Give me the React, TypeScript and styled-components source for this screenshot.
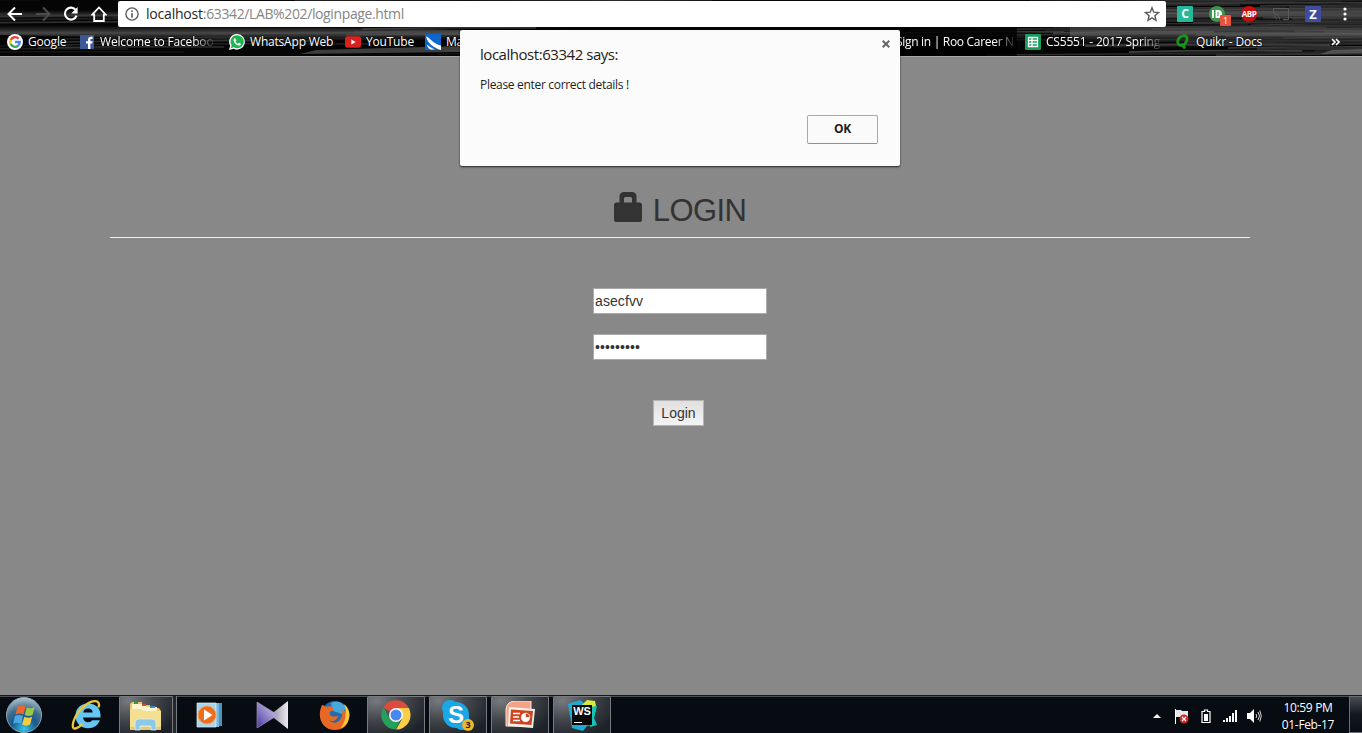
import React from "react";
import styled, { createGlobalStyle, css } from "styled-components";

const uiFont = `"Segoe UI", "Open Sans", "Noto Sans", sans-serif`;
const pageFont = `"Liberation Sans", Arial, sans-serif`;

const GlobalStyle = createGlobalStyle`
  * { box-sizing: border-box; }
  body { margin: 0; overflow: hidden; background: #888; }
  svg { display: block; flex: none; }
`;

const Screen = styled.div`
  position: relative;
  display: flex;
  flex-direction: column;
  width: 1362px;
  height: 733px;
  overflow: hidden;
  background: #888;
  font-family: ${uiFont};
`;

/* ---------- Browser chrome ---------- */

const Chrome = styled.header`
  position: relative;
  height: 57px;
  background: #050505;
`;

const Texture = styled.svg`
  position: absolute;
  inset: 0;
`;

const Toolbar = styled.div`
  position: relative;
  display: flex;
  align-items: center;
  height: 27px;
  padding-top: 1px;
`;

const NavButtons = styled.div`
  display: flex;
  align-items: center;
  gap: 12px;
  width: 118px;
  padding-left: 7px;
`;

const AddressBar = styled.div`
  display: flex;
  align-items: center;
  width: 1048px;
  height: 26px;
  padding: 0 6px 0 7px;
  border-radius: 2px;
  background: #fff;
`;

const Url = styled.span`
  flex: 1;
  margin-left: 7px;
  font-size: 14px;
  line-height: 20px;
  letter-spacing: -0.38px;
  color: #858585;
  b { font-weight: 400; color: #262626; letter-spacing: -0.2px; }
`;

const Extensions = styled.div`
  display: flex;
  flex: 1;
  align-items: center;
  gap: 16px;
  padding: 0 15px 0 11px;
`;

const ExtensionTile = styled.div<{ $color: string; $round?: boolean; $size?: number; $tight?: boolean }>`
  position: relative;
  display: flex;
  align-items: center;
  justify-content: center;
  flex: none;
  width: 16px;
  height: 16px;
  border-radius: ${(p) => (p.$round ? "50%" : "1px")};
  background: ${(p) => p.$color};
  color: #fff;
  font: 700 ${(p) => p.$size ?? 12}px/16px ${uiFont};
  letter-spacing: ${(p) => (p.$tight ? "-0.4px" : "0")};
`;

const CountBadge = styled.span`
  position: absolute;
  left: 11px;
  top: 9px;
  width: 11px;
  height: 11px;
  border-radius: 1px;
  background: #e8513f;
  font: 400 9px/11px ${uiFont};
  text-align: center;
`;

const BookmarksBar = styled.nav`
  position: relative;
  display: flex;
  align-items: center;
  height: 30px;
  padding-left: 7px;
  border-bottom: 1px solid #a8a8a8;
`;

const Bookmark = styled.div<{ $width: number }>`
  display: flex;
  align-items: center;
  gap: 5px;
  width: ${(p) => p.$width}px;
  flex: none;
`;

const BookmarkLabel = styled.span<{ $spacing?: number; $fade?: boolean }>`
  white-space: nowrap;
  font-size: 12px;
  line-height: 16px;
  letter-spacing: ${(p) => p.$spacing ?? -0.2}px;
  color: #fff;
  text-shadow: 0 0 2px #000, 0 0 1px #000;
  ${(p) =>
    p.$fade &&
    css`
      mask-image: linear-gradient(to right, #000 calc(100% - 20px), rgba(0, 0, 0, 0.15));
    `}
`;

/* ---------- Page ---------- */

const Page = styled.main`
  display: flex;
  flex-direction: column;
  align-items: center;
  height: 638px;
  padding-top: 133px;
  font-family: ${pageFont};
  color: #333;
`;

const Heading = styled.h1`
  display: flex;
  align-items: flex-start;
  justify-content: center;
  gap: 11px;
  width: 1140px;
  height: 48px;
  margin: 0 2px 50px 0;
  padding-top: 2px;
  border-bottom: 1px solid #eee;
  font-size: 31px;
  font-weight: 400;
  line-height: 38px;
  letter-spacing: -0.6px;
`;

const Field = styled.input`
  width: 174px;
  height: 26px;
  margin: 0 2px 20px 0;
  padding: 0 1px;
  border: 1px solid #aaa;
  border-radius: 0;
  outline: none;
  background: #fff;
  color: #333;
  font: 14px ${pageFont};
  letter-spacing: 0.1px;
`;

const LoginButton = styled.button`
  width: 51px;
  height: 26px;
  margin: 20px 5px 0 0;
  padding: 0;
  border: 1px solid #b4b4b4;
  background: linear-gradient(#e0e0e0, #f4f4f4);
  color: #333;
  font: 14px ${pageFont};
`;

/* ---------- Alert ---------- */

const Dialog = styled.section`
  position: absolute;
  left: 460px;
  top: 30px;
  display: flex;
  flex-direction: column;
  width: 440px;
  height: 136px;
  padding: 13px 22px 22px 20px;
  border-radius: 2px;
  background: #fbfbfb;
  box-shadow: 0 1px 2px rgba(0, 0, 0, 0.75);
  color: #1d1d1d;
`;

const DialogTitle = styled.h2`
  margin: 0;
  font-size: 15px;
  font-weight: 400;
  line-height: 22px;
  letter-spacing: -0.46px;
`;

const DialogText = styled.p`
  margin: 11px 0 0;
  font-size: 12px;
  line-height: 18px;
  letter-spacing: -0.31px;
`;

const OkButton = styled.button`
  align-self: flex-end;
  width: 71px;
  height: 29px;
  margin-top: auto;
  padding: 0 0 2px;
  border: 1px solid #a9a9a9;
  border-bottom-color: #8f8f8f;
  border-radius: 2px;
  background: #fafafa;
  color: #1d1d1d;
  font: 700 12px ${uiFont};
  letter-spacing: -0.3px;
`;

const CloseButton = styled.span`
  position: absolute;
  right: 10px;
  top: 10px;
`;

/* ---------- Taskbar ---------- */

const Taskbar = styled.footer`
  display: flex;
  height: 38px;
  border-top: 1px solid #15171b;
  background: #070b12;
  box-shadow: inset 0 1px #4a4e54;
`;

const TaskItem = styled.div<{ $width: number; $active?: boolean; $indent?: number }>`
  display: flex;
  align-items: center;
  justify-content: center;
  flex: none;
  width: ${(p) => p.$width}px;
  height: 37px;
  margin-right: 4px;
  padding-left: ${(p) => p.$indent ?? 0}px;
  border: 1px solid transparent;
  border-bottom: 0;
  ${(p) =>
    p.$active &&
    css`
      border-color: #777b80;
      border-radius: 2px 2px 0 0;
      background: radial-gradient(ellipse at 15% 10%, #777b7f 0%, #45494e 40%, #1d2228 85%);
    `}
`;

const StackEdge = styled.span`
  width: 4px;
  height: 37px;
  margin: 0 0 0 -4px;
  border-right: 1px solid #777b80;
  background: #23272c;
`;

const Tray = styled.div`
  display: flex;
  align-items: center;
  margin-left: auto;
  padding: 3px 2px 0 0;
`;

const TrayIcon = styled.span<{ $width: number }>`
  width: ${(p) => p.$width}px;
`;

const Clock = styled.time`
  width: 78px;
  color: #fff;
  font-size: 12px;
  line-height: 17px;
  letter-spacing: -0.35px;
  text-align: center;
`;

const ShowDesktop = styled.span`
  width: 13px;
  height: 37px;
  border: 1px solid #6b6f74;
  border-right: 0;
  background: linear-gradient(#484c50, #14181d 50%, #0a0e14);
`;

/* ---------- Drawings ---------- */

type Streak = { d: string; shade: number; w: number };

const makeStreaks = (count: number, from: number, span: number, base: number): Streak[] =>
  Array.from({ length: count }, (_, i) => {
    const x = from + ((i * 233) % span) - 60;
    const y = 1 + ((i * 17) % 55);
    const len = 160 + ((i * 71) % 200);
    const dy = ((i * 5) % 5) - 2;
    return {
      d: `M${x} ${y}q${len / 2} ${dy} ${len} ${dy / 2}`,
      shade: base + ((i * 29) % 30),
      w: 0.7 + (i % 4) * 0.4,
    };
  });

const streaks = [...makeStreaks(58, -60, 1240, 26), ...makeStreaks(56, 1090, 300, 34)];

const ChromeTexture = () => (
  <Texture width="1362" height="57" viewBox="0 0 1362 57">
    <defs>
      <linearGradient id="haze" x1="0" x2="0" y1="0" y2="1">
        <stop offset="0" stopColor="#444" stopOpacity="0" />
        <stop offset=".5" stopColor="#666" stopOpacity=".7" />
        <stop offset="1" stopColor="#333" stopOpacity="0" />
      </linearGradient>
    </defs>
    {streaks.map((s, i) => (
      <path key={i} d={s.d} fill="none" stroke={`rgb(${s.shade},${s.shade},${s.shade})`} strokeWidth={s.w} />
    ))}
    <path d="M0 25l160 2 240 1 60 2v10l-160 1L0 35z" fill="url(#haze)" />
    <path d="M0 10h118v9H0z" fill="url(#haze)" opacity=".6" />
    <path d="M1070 27l292-4v15l-292 6z" fill="url(#haze)" />
    <path d="M1166 8l196-3v14l-196 3z" fill="url(#haze)" opacity=".9" />
    <path d="M900 28h117v28H900z" fill="#000" opacity=".8" />
    <path d="M300 54l16-4 144-4v6z" fill="#555" opacity=".7" />
    <path d="M1320 54l12-4 30-1v4z" fill="#666" opacity=".7" />
  </Texture>
);

const BackIcon = () => (
  <svg width="16" height="16" viewBox="0 0 16 16" fill="none" stroke="#fff" strokeWidth="2">
    <path d="M15 8H2M8 1.5L1.5 8 8 14.5" />
  </svg>
);
const ForwardIcon = () => (
  <svg width="16" height="16" viewBox="0 0 16 16" fill="none" stroke="#4c4c4c" strokeWidth="2">
    <path d="M1 8h13M8 1.5L14.5 8 8 14.5" />
  </svg>
);
const ReloadIcon = () => (
  <svg width="16" height="16" viewBox="0 0 16 16">
    <path d="M12.9 4.2A6 6 0 1 0 13.6 9.6" fill="none" stroke="#fff" strokeWidth="2.1" />
    <path d="M14.6 1v6.4H8.2z" fill="#fff" />
  </svg>
);
const HomeIcon = () => (
  <svg width="16" height="16" viewBox="0 0 16 16" fill="none" stroke="#fff" strokeWidth="1.8">
    <path d="M1.2 8.7L8 1.5l6.8 7.2h-2V15H3.2V8.7z" />
  </svg>
);
const InfoIcon = () => (
  <svg width="14" height="14" viewBox="0 0 14 14">
    <circle cx="7" cy="7" r="6.1" fill="none" stroke="#5c5c5c" strokeWidth="1.4" />
    <path d="M6.2 3.3h1.6v1.6H6.2zM6.2 6h1.6v4.8H6.2z" fill="#5c5c5c" />
  </svg>
);
const StarIcon = () => (
  <svg width="16" height="16" viewBox="0 0 16 16">
    <path d="M8 1.8l1.8 4.4 4.7.4-3.6 3.1 1.1 4.6L8 11.9l-4 2.4 1.1-4.6-3.6-3.1 4.7-.4z" fill="none" stroke="#5c5c5c" strokeWidth="1.4" />
  </svg>
);
const CastIcon = () => (
  <svg width="16" height="16" viewBox="0 0 16 16" fill="none" stroke="#5a5a5a" strokeWidth="1">
    <path d="M.5 6V2.5h15v11H10M.5 7.5a6 6 0 0 1 6 6M.5 10.5a3 3 0 0 1 3 3" />
  </svg>
);
const MenuIcon = () => (
  <svg width="4" height="16" viewBox="0 0 4 16" fill="#fff">
    <circle cx="2" cy="3" r="1.6" /><circle cx="2" cy="8" r="1.6" /><circle cx="2" cy="13" r="1.6" />
  </svg>
);
const MenuSlot = styled.span`
  margin-left: auto;
`;
const PocketIcon = () => (
  <svg width="12" height="10" viewBox="0 0 12 10">
    <path d="M1 1h2v8H1z" fill="#fff" />
    <path d="M4.5 1H7a4 4 0 0 1 0 8H4.5z" fill="#fff" />
    <path d="M7 3v4" stroke="#3c964b" />
  </svg>
);
const GoogleIcon = () => (
  <svg width="16" height="16" viewBox="0 0 16 16">
    <circle cx="8" cy="8" r="8" fill="#fff" />
    <g fill="none" strokeWidth="2.3">
      <path d="M11.5 4.7A4.8 4.8 0 0 0 3.7 5.9" stroke="#ea4335" />
      <path d="M3.7 5.9a4.8 4.8 0 0 0 0 4.2" stroke="#fbbc05" />
      <path d="M3.7 10.1a4.8 4.8 0 0 0 7.5 1.5" stroke="#34a853" />
      <path d="M8 8h4.8a4.8 4.8 0 0 1-1.6 3.6" stroke="#4285f4" />
    </g>
  </svg>
);
const FacebookIcon = () => (
  <svg width="15" height="16" viewBox="0 0 15 16">
    <path d="M0 1h14v14H0z" fill="#3b5998" />
    <path d="M8 15V9.5H6V7.2h2V5.7C8 3.8 9.2 2.8 11 2.8h1.6V5h-1.2c-.8 0-1 .4-1 1v1.2h2.2l-.3 2.3h-1.9V15z" fill="#fff" />
  </svg>
);
const WhatsAppIcon = () => (
  <svg width="16" height="16" viewBox="0 0 16 16">
    <path d="M8.2 0a7.8 7.8 0 1 1-3.6 14.8L0 16l1.2-4.3A7.8 7.8 0 0 1 8.2 0z" fill="#fff" />
    <path d="M8.2 1.3a6.5 6.5 0 1 1-3.4 12l-3 .9.8-2.9A6.5 6.5 0 0 1 8.2 1.3z" fill="#1eb354" />
    <path d="M5.8 4.3c-.8.2-1.3 1-1.2 1.9.5 2.8 2.4 4.8 5.2 5.4 1 .1 1.8-.4 2-1.3v-.6L9.9 8.8l-.9 1c-1.2-.5-2-1.4-2.5-2.4l.8-.9-.8-2.1z" fill="#fff" />
  </svg>
);
const YouTubeIcon = () => (
  <svg width="16" height="16" viewBox="0 0 16 16">
    <rect y="2.3" width="16" height="11.4" rx="2.6" fill="#d9211f" />
    <path d="M6.3 5.5v5l4.4-2.5z" fill="#fff" />
  </svg>
);
const WaveIcon = () => (
  <svg width="16" height="16" viewBox="0 0 16 16">
    <path d="M0 0h16v16H0z" fill="#0c66cc" />
    <path d="M1 2.5c4 1 7 7.5 15 9V16C9 14 3 10 1 2.5z" fill="#fff" />
    <path d="M2 10.5c2 1.5 4 3.5 8 5H5.5C3.5 14.5 2.3 13 2 10.5z" fill="#fff" />
  </svg>
);
const SheetIcon = () => (
  <svg width="16" height="16" viewBox="0 0 16 16">
    <rect width="16" height="16" rx="1" fill="#169c5b" />
    <path d="M3.5 3.5h9v9h-9zM3.5 6.5h9M3.5 9.5h9M7 3.5v9" fill="none" stroke="#fff" strokeWidth="1.3" />
  </svg>
);
const QuikrIcon = () => (
  <svg width="16" height="16" viewBox="0 0 16 16" fill="none" stroke="#149a16" strokeWidth="2.8">
    <path d="M7.5 2c3.800-.9 5.200 1 4.300 4.400-.8 3-2.600 5-5 5-3 0-4.600-2-3.900-4.900.6-2.500 2.300-4 4.600-4.500zM6.500 9.500l3.500 5" />
  </svg>
);
const LockIcon = () => (
  <svg width="28" height="31" viewBox="0 0 28 31">
    <path d="M5.500 10.500V4.500Q5.500 0 10 0h8q4.500 0 4.500 4.500v6h3q2.500 0 2.500 2.500v14.500q0 2.500-2.500 2.500h-23Q0 30 0 27.500V13q0-2.500 2.500-2.500zM10 10.500h8V6.500Q18 5 16.500 5h-5Q10 5 10 6.500z" fill="#333" fillRule="evenodd" />
  </svg>
);

const StartIcon = () => (
  <svg width="38" height="36" viewBox="0 0 38 36">
    <defs>
      <radialGradient id="orb" cx=".5" cy=".9" r=".9">
        <stop offset="0" stopColor="#35c4ef" /><stop offset=".4" stopColor="#175a8d" /><stop offset=".65" stopColor="#3f6d8c" /><stop offset="1" stopColor="#b3c6d0" />
      </radialGradient>
    </defs>
    <circle cx="19" cy="18" r="17.500" fill="url(#orb)" stroke="#8ba5b2" strokeWidth="1" />
    <path d="M12.500 9.500q4-2.500 8 0L18.500 17.500q-4-2-8 0z" fill="#ed6530" />
    <path d="M21.800 10.300q4 2 8-.3l-2.300 8q-4 2-7.800 0z" fill="#9ac847" />
    <path d="M10 19q4-2 8 0l-2 7.800q-3.800-2.200-8 0z" fill="#4ca9e0" />
    <path d="M19.300 19.700q4 2 7.900 0l-2.200 7.800q-4 2.300-7.800 0z" fill="#fbcb3e" />
  </svg>
);
const ExplorerEIcon = () => (
  <svg width="32" height="32" viewBox="0 0 32 32">
    <path d="M29.500 18.500H12c.4 3 2.300 4.800 5 4.800 2 0 3.300-.7 4.200-2h7.600c-1.700 5-5.800 8-11.800 8C9.500 29.300 4.500 24 4.500 16.800S9.500 4.500 17 4.500C25.500 4.500 30.300 10 29.500 18.500zM12.200 13.500h9.600c-.4-2.600-2-4-4.700-4s-4.400 1.400-4.900 4z" fill="#66c6f3" />
    <path d="M27.500 8.500C30.500-.5 20 0 10.500 9.500 2 18.500-1 30.500 4.500 29.500c2.500-.5 5-2.500 7-4.500" fill="none" stroke="#f2c631" strokeWidth="2.300" />
  </svg>
);
const FolderIcon = () => (
  <svg width="34" height="32" viewBox="0 0 34 32">
    <path d="M3 3h10v3h8v3h9l2 3v19H1V5z" fill="#e8c868" />
    <path d="M3 5h12l3 3h10v4H3z" fill="#fff5cd" />
    <path d="M5 3h4v2H5z" fill="#37994e" /><path d="M13 5h4v2h-4z" fill="#d3492c" /><path d="M21 7h5v2h-5z" fill="#3a8ccb" />
    <path d="M1 10h11l2 2h18v16H1z" fill="#f5df91" />
    <path d="M6 31v-7q0-4 4-4h13q4 0 4 4v7h-5v-4H11v4z" fill="#8ec8e8" stroke="#d8effc" strokeWidth=".8" />
  </svg>
);
const MediaIcon = () => (
  <svg width="28" height="28" viewBox="0 0 28 28">
    <path d="M10 2h16v23H10z" fill="#4b94be" /><path d="M6 2h17v24H6z" fill="#74b7da" />
    <path d="M1 2h19v24H1z" fill="#a9d6ec" stroke="#e0f3fc" strokeWidth=".7" />
    <circle cx="11" cy="14" r="9" fill="#ee6c1c" stroke="#f7a15c" />
    <path d="M8 8.500v11l8.500-5.500z" fill="#fff" />
  </svg>
);
const KmIcon = () => (
  <svg width="33" height="28" viewBox="0 0 33 28">
    <defs>
      <linearGradient id="km" x1="0" x2="1" y1="1" y2="0"><stop stopColor="#4a37a0" /><stop offset="1" stopColor="#e3dcf2" /></linearGradient>
      <linearGradient id="km2" x1="0" x2="1"><stop stopColor="#8e8899" /><stop offset="1" stopColor="#eeeaf2" /></linearGradient>
    </defs>
    <path d="M32 0v28L14 14z" fill="url(#km2)" /><path d="M1 1l21 13L1 27z" fill="url(#km)" stroke="#a99acf" strokeWidth=".6" />
  </svg>
);
const FirefoxIcon = () => (
  <svg width="31" height="31" viewBox="0 0 31 31">
    <circle cx="16" cy="14.500" r="13.500" fill="#236bab" />
    <path d="M12 3c6-3 13 0 15 5l-4 6-9-3z" fill="#45a8df" />
    <path d="M3 5c2 0 3 1 4 2 3-1 5-1 6 0l2 3c-1 1-3 1-4 2-1 2 0 3 1 4 3 1 5 0 7 0-1 5-6 6-9 4 7 7 15-1 13-10 6 1 8 6 6 12-2 5-7 8-13 8C4 30-3 18 3 5z" fill="#e76824" />
    <path d="M25 4c5 4 7 10 4.500 16-1.500 4-4.500 7-8 8.500 5-7 7-16 3.500-24.500z" fill="#f9cb38" />
  </svg>
);
const ChromeIcon = () => (
  <svg width="30" height="30" viewBox="0 0 30 30">
    <path d="M15 15L2.400 7.500A14.500 14.500 0 0 1 27.800 8H15z" fill="#dd4b3e" />
    <path d="M15 8h12.800A14.500 14.500 0 0 1 15 29.500L21.300 18.500z" fill="#fccd48" />
    <path d="M2.400 7.500L8.800 18.500 15 22l4-1-4.500 8.500A14.500 14.500 0 0 1 2.400 7.500z" fill="#25a05b" />
    <circle cx="15" cy="15" r="7" fill="#fff" /><circle cx="15" cy="15" r="5.500" fill="#4787ef" />
  </svg>
);

const SkypeBox = styled.span`
  position: relative;
  width: 32px;
  height: 31px;
`;
const SkypeLetter = styled.b`
  position: absolute;
  inset: 0 4px 0 0;
  color: #fff;
  font: 700 24px/29px ${pageFont};
  text-align: center;
`;
const SkypeCount = styled.span`
  position: absolute;
  right: 0;
  bottom: 0;
  width: 12px;
  height: 12px;
  border-radius: 50%;
  background: #efb52d;
  color: #222;
  font: 700 9px/12px ${uiFont};
  text-align: center;
`;
const SkypeIcon = () => (
  <SkypeBox>
    <svg width="28" height="30" viewBox="0 0 28 30">
      <circle cx="8" cy="8" r="8" fill="#19a8e6" /><circle cx="20" cy="22" r="8" fill="#19a8e6" /><circle cx="14" cy="15" r="13" fill="#19a8e6" />
    </svg>
    <SkypeLetter>S</SkypeLetter>
    <SkypeCount>3</SkypeCount>
  </SkypeBox>
);
const PowerPointIcon = () => (
  <svg width="31" height="29" viewBox="0 0 31 29">
    <path d="M1 8Q2 0 11 0h15v25H1z" fill="#f2a487" stroke="#ffe2d6" />
    <path d="M4 6l26 2-2 19-25-2z" fill="#fbf1ec" />
    <path d="M6 8.500l22 1.500-1.500 14L5 22.500z" fill="#cf4420" />
    <path d="M8 12.500h7M8 16h6M8 19.500h7" stroke="#fff" strokeWidth="1.600" />
    <circle cx="20.500" cy="16.500" r="4.500" fill="#fff" /><path d="M20.500 16.500V12a4.500 4.500 0 0 1 4.500 4.500z" fill="#cf4420" stroke="#fff" strokeWidth=".7" />
  </svg>
);
const WebStormBox = styled.span`
  position: relative;
  width: 32px;
  height: 33px;
`;
const WebStormLabel = styled.b`
  position: absolute;
  left: 6px;
  top: 6px;
  width: 20px;
  height: 20px;
  background: #090909;
  color: #fff;
  font: 700 11px/13px ${pageFont};
  text-align: center;
  &::after {
    content: "";
    position: absolute;
    left: 2px;
    bottom: 2px;
    width: 8px;
    height: 1px;
    background: #fff;
  }
`;
const WebStormIcon = () => (
  <WebStormBox>
    <svg width="32" height="33" viewBox="0 0 32 33">
      <path d="M2 5l12-4 4 3 4-3 6 4 2 7-3 5 3 8-9 2-4 5-11-3z" fill="#1fa9d5" />
      <path d="M16 6l5-5 8 1 1 5-7 3-8-1z" fill="#dbe93c" /><path d="M24 8l7-1-3 12 3 7-7 2z" fill="#12c6bb" />
    </svg>
    <WebStormLabel>WS</WebStormLabel>
  </WebStormBox>
);

const FlagIcon = () => (
  <svg width="15" height="16" viewBox="0 0 15 16">
    <path d="M1.500 1v15" stroke="#fff" /><path d="M2 2h5l1 1h6v7H8L7 9H2z" fill="#e8e8e8" />
    <circle cx="10" cy="11" r="4.500" fill="#ce2929" /><path d="M8 9l4 4M12 9l-4 4" stroke="#fff" strokeWidth="1.300" />
  </svg>
);
const BatteryIcon = () => (
  <svg width="10" height="15" viewBox="0 0 10 15">
    <path d="M3.500 1h3v1.500H9v11H1v-11h2.500z" fill="none" stroke="#fff" strokeWidth="1.200" /><path d="M3 5h4v7H3z" fill="#fff" />
  </svg>
);
const SignalIcon = () => (
  <svg width="15" height="12" viewBox="0 0 15 12" fill="#fff"><path d="M0 10h2v2H0zM3 8h2v4H3zM6 6h2v6H6zM9 3h2v9H9zM12 0h2v12h-2z" /></svg>
);
const VolumeIcon = () => (
  <svg width="15" height="14" viewBox="0 0 15 14">
    <path d="M0 4h3l4-4v14l-4-4H0z" fill="#fff" />
    <path d="M9 5q1.500 2 0 4M11 3q3 4 0 8M12.800 1.500q3 5.500 0 11" fill="none" stroke="#d8d8d8" />
  </svg>
);

export default function App() {
  return (
    <Screen>
      <GlobalStyle />
      <Chrome>
        <ChromeTexture />
        <Toolbar>
          <NavButtons><BackIcon /><ForwardIcon /><ReloadIcon /><HomeIcon /></NavButtons>
          <AddressBar>
            <InfoIcon />
            <Url><b>localhost</b>:63342/LAB%202/loginpage.html</Url>
            <StarIcon />
          </AddressBar>
          <Extensions>
            <ExtensionTile $color="#25b99a">C</ExtensionTile>
            <ExtensionTile $color="#3c964b" $round><PocketIcon /><CountBadge>1</CountBadge></ExtensionTile>
            <ExtensionTile $color="#c70d0d" $round $size={8} $tight>ABP</ExtensionTile>
            <CastIcon />
            <ExtensionTile $color="#3f4da0" $size={13}>Z</ExtensionTile>
            <MenuSlot><MenuIcon /></MenuSlot>
          </Extensions>
        </Toolbar>
        <BookmarksBar>
          <Bookmark $width={73}><GoogleIcon /><BookmarkLabel>Google</BookmarkLabel></Bookmark>
          <Bookmark $width={149}><FacebookIcon /><BookmarkLabel $fade $spacing={-0.17}>Welcome to Faceboo</BookmarkLabel></Bookmark>
          <Bookmark $width={116}><WhatsAppIcon /><BookmarkLabel>WhatsApp Web</BookmarkLabel></Bookmark>
          <Bookmark $width={80}><YouTubeIcon /><BookmarkLabel>YouTube</BookmarkLabel></Bookmark>
          <Bookmark $width={471}><WaveIcon /><BookmarkLabel>Ma</BookmarkLabel></Bookmark>
          <Bookmark $width={129}><BookmarkLabel $fade $spacing={-0.3}>Sign in | Roo Career N</BookmarkLabel></Bookmark>
          <Bookmark $width={150}><SheetIcon /><BookmarkLabel $fade>CS5551 - 2017 Spring</BookmarkLabel></Bookmark>
          <Bookmark $width={156}><QuikrIcon /><BookmarkLabel>Quikr - Docs</BookmarkLabel></Bookmark>
          <svg width="9" height="8" viewBox="0 0 9 8" fill="none" stroke="#fff" strokeWidth="1.6"><path d="M1 1l3 3-3 3M5 1l3 3-3 3" /></svg>
        </BookmarksBar>
      </Chrome>

      <Page>
        <Heading><LockIcon />LOGIN</Heading>
        <Field type="text" defaultValue="asecfvv" />
        <Field type="password" defaultValue="asecfvvab" />
        <LoginButton>Login</LoginButton>
      </Page>

      <Taskbar>
        <TaskItem $width={48}><StartIcon /></TaskItem>
        <TaskItem $width={63} $indent={7}><ExplorerEIcon /></TaskItem>
        <TaskItem $width={54} $active><FolderIcon /></TaskItem>
        <StackEdge />
        <TaskItem $width={62} $indent={3}><MediaIcon /></TaskItem>
        <TaskItem $width={58}><KmIcon /></TaskItem>
        <TaskItem $width={58}><FirefoxIcon /></TaskItem>
        <TaskItem $width={58} $active><ChromeIcon /></TaskItem>
        <TaskItem $width={58} $active><SkypeIcon /></TaskItem>
        <TaskItem $width={58} $active><PowerPointIcon /></TaskItem>
        <TaskItem $width={58} $active><WebStormIcon /></TaskItem>
        <Tray>
          <TrayIcon $width={21}><svg width="8" height="4" viewBox="0 0 8 4"><path d="M0 4l4-4 4 4z" fill="#fff" /></svg></TrayIcon>
          <TrayIcon $width={27}><FlagIcon /></TrayIcon>
          <TrayIcon $width={22}><BatteryIcon /></TrayIcon>
          <TrayIcon $width={24}><SignalIcon /></TrayIcon>
          <TrayIcon $width={22}><VolumeIcon /></TrayIcon>
          <Clock>10:59 PM<br />01-Feb-17</Clock>
        </Tray>
        <ShowDesktop />
      </Taskbar>

      <Dialog>
        <CloseButton>
          <svg width="8" height="8" viewBox="0 0 8 8" stroke="#666" strokeWidth="2"><path d="M.7.7l6.600 6.600M7.300.7L.7 7.300" /></svg>
        </CloseButton>
        <DialogTitle>localhost:63342 says:</DialogTitle>
        <DialogText>Please enter correct details !</DialogText>
        <OkButton>OK</OkButton>
      </Dialog>
    </Screen>
  );
}
